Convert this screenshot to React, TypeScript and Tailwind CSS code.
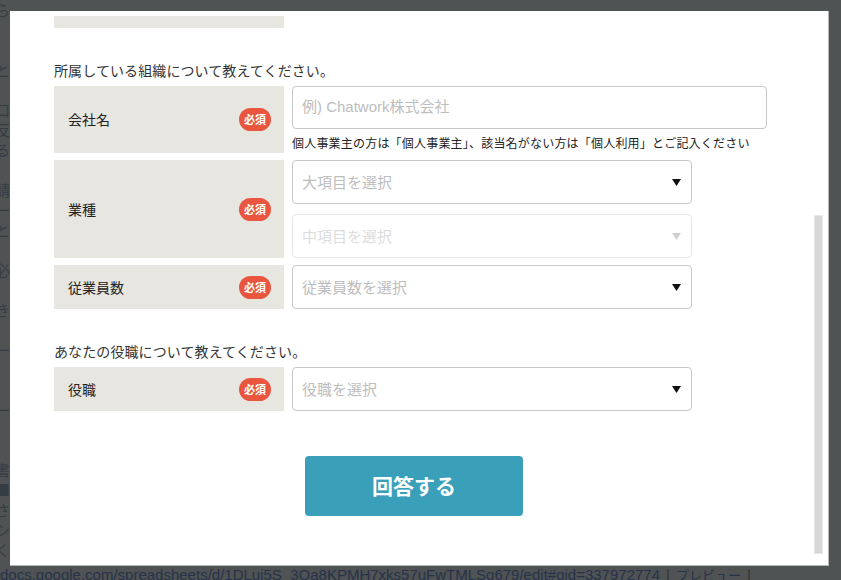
import { ReactNode } from "react";

const jp = "font-['Noto_Sans_CJK_JP','Noto_Sans',sans-serif]";

const backdropLines = [
    "ら", "", "", "と", "", "口", "反", "る", "", "請", "ー", "と", "", "必", "", "き", "", "ー", "", "", "ー", "", "", "書", "■", "さ", "シ", "く",
];

function Badge() {
    return (
        <span className="flex h-[23px] w-[32px] items-center justify-center rounded-full bg-[#e9553e] text-[11px] font-bold leading-none text-white">
            必須
        </span>
    );
}

function Label({ children, className }: { children: ReactNode; className: string }) {
    return (
        <div className={`flex w-[230px] shrink-0 items-center justify-between bg-[#e7e6e1] pl-[14px] pr-[13px] ${className}`}>
            <span className="text-[14px] text-[#222]">{children}</span>
            <Badge />
        </div>
    );
}

function Select({ text, disabled = false }: { text: string; disabled?: boolean }) {
    return (
        <div
            className={`flex h-[44px] w-[400px] items-center justify-between rounded-[4px] border bg-white pl-[9px] pr-[10px] ${
                disabled ? "border-[#e6e6e6]" : "border-[#c8c8c8]"
            }`}
        >
            <span className={`text-[15px] ${disabled ? "text-[#dcdcdc]" : "text-[#bdbdbd]"}`}>{text}</span>
            <svg width="9" height="7" viewBox="0 0 9 7">
                <path d="M0 0 H9 L4.5 7 Z" fill={disabled ? "#cfcfcf" : "#111"} />
            </svg>
        </div>
    );
}

export default function App() {
    return (
        <div className={`relative h-[580px] w-[841px] overflow-hidden bg-[#505353] ${jp}`}>
            {/* page behind the overlay */}
            <div className="-ml-[5px] flex flex-col text-[15px] leading-[20px] text-[#363c46]">
                {backdropLines.map((line, i) => (
                    <div key={i} className="h-[20px] whitespace-nowrap">
                        {line}
                    </div>
                ))}
            </div>
            <div className="absolute bottom-[-5px] left-0 whitespace-nowrap font-['Liberation_Sans','Noto_Sans_CJK_JP',sans-serif] text-[15px] leading-[20px] text-[#27324a]">
                docs.google.com/spreadsheets/d/1DLui5S_3Qa8KPMH7xks57uFwTMLSg679/edit#gid=337972774
                <span className="mx-[6px] text-[#333]">|</span>
                <span className={`${jp} text-[13px]`}>プレビュー</span>
                <span className="mx-[6px] text-[#333]">|</span>
            </div>

            {/* modal */}
            <div className="absolute left-[10px] top-[11px] h-[555px] w-[819px] overflow-hidden border-b border-r border-[#b8b8b8] bg-white">
                <div className="flex flex-col pl-[44px] pt-[5px]">
                    <div className="h-[12px] w-[230px] bg-[#e7e6e1]" />

                    <p className="mt-[32px] text-[14px] leading-[20px] tracking-[0.1px] text-[#333]">所属している組織について教えてください。</p>

                    <div className="mt-[6px] flex gap-[8px]">
                        <Label className="h-[67px]">会社名</Label>
                        <div className="flex flex-col">
                            <div className="flex h-[43px] w-[475px] items-center rounded-[4px] border border-[#c8c8c8] pl-[9px]">
                                <span className="font-['Liberation_Sans','Noto_Sans_CJK_JP',sans-serif] text-[15px] text-[#bdbdbd]">
                                    例) Chatwork株式会社
                                </span>
                            </div>
                            <p className="mt-[5px] text-[12px] leading-[18px] tracking-[0.2px] text-[#222]">
                                個人事業主の方は「個人事業主」、該当名がない方は「個人利用」とご記入ください
                            </p>
                        </div>
                    </div>

                    <div className="mt-[7px] flex gap-[8px]">
                        <Label className="h-[98px]">業種</Label>
                        <div className="flex flex-col gap-[10px]">
                            <Select text="大項目を選択" />
                            <Select text="中項目を選択" disabled />
                        </div>
                    </div>

                    <div className="mt-[7px] flex gap-[8px]">
                        <Label className="h-[44px]">従業員数</Label>
                        <Select text="従業員数を選択" />
                    </div>

                    <p className="mt-[32px] text-[14px] leading-[20px] tracking-[0.1px] text-[#333]">あなたの役職について教えてください。</p>

                    <div className="mt-[6px] flex gap-[8px]">
                        <Label className="h-[44px]">役職</Label>
                        <Select text="役職を選択" />
                    </div>

                    <button className="ml-[251px] mt-[45px] flex h-[60px] w-[218px] items-center justify-center rounded-[4px] bg-[#3aa0b9] text-[21px] font-bold text-white">
                        回答する
                    </button>
                </div>

                {/* scrollbar */}
                <div className="absolute right-[5px] top-[204px] h-[339px] w-[9px] border border-[#e8e8e8] bg-[#d7d7d7]" />
            </div>
        </div>
    );
}
